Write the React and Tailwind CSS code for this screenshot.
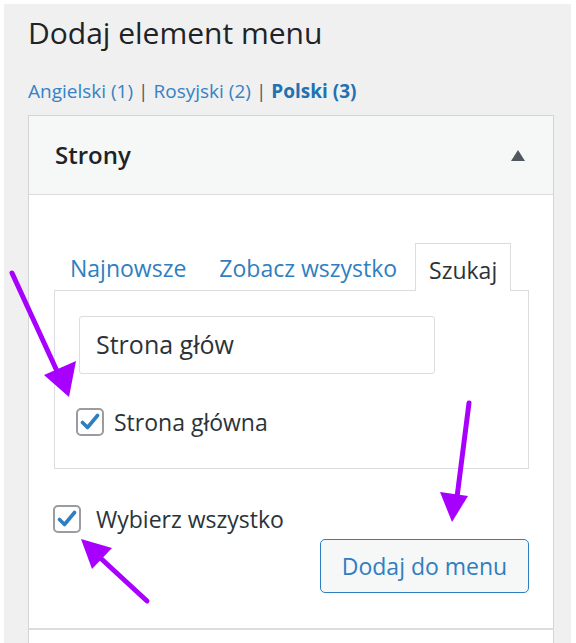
import React from 'react';

const font = { fontFamily: '"Open Sans", "Noto Sans", sans-serif' };

const Check = ({ className = '' }) => (
  <span className={`flex items-center justify-center w-[28px] h-[28px] shrink-0 rounded-[5px] border-2 border-[#9a9ca2] bg-white ${className}`}>
    <svg width="20" height="18" viewBox="0 0 20 18">
      <path d="M2.5 9.5 L7.5 14.5 L17.5 2.5" fill="none" stroke="#2f7fc0" strokeWidth="3.6" strokeLinecap="round" strokeLinejoin="round" />
    </svg>
  </span>
);

export default function App() {
  return (
    <div className="relative w-[576px] h-[643px] overflow-hidden bg-white text-[#2c3338]" style={font}>
      <div className="ml-[4px] mt-[4px] mr-[5px] h-[639px] bg-[#f0f0f1] pl-[24px] pr-[17px]">
        <h2 className="pt-[11px] text-[30px] leading-[36px] text-[#1d2327]">Dodaj element menu</h2>
        <div className="mt-[27px] h-[26px] text-[19px] leading-[26px] text-[#3582c4] flex gap-[5px]">
          <span>Angielski (1)</span>
          <span className="text-[#50575e]">|</span>
          <span>Rosyjski (2)</span>
          <span className="text-[#50575e]">|</span>
          <span className="font-bold text-[#2271b1]">Polski (3)</span>
        </div>
        <div className="mt-[11px] border border-[#d3d4d6] bg-white h-[600px]">
          <div className="h-[79px] bg-[#f6f7f7] border-b border-[#dcdcde] flex items-center justify-between pl-[26px] pr-[28px]">
            <span className="text-[24px] font-semibold text-[#1d2327]">Strony</span>
            <svg width="14" height="11" viewBox="0 0 14 11"><path d="M7 0 L14 11 L0 11 Z" fill="#50575e" /></svg>
          </div>
          <div className="pl-[25px] pr-[24px]">
            <div className="mt-[47px] flex items-end h-[48px] text-[23px] leading-[30px]">
              <span className="pl-[16px] pb-[7px] text-[#2f7fc0]">Najnowsze</span>
              <span className="ml-[33px] pb-[7px] text-[#2f7fc0]">Zobacz wszystko</span>
              <span className="ml-[18px] h-[48px] w-[96px] border border-b-0 border-[#dcdcde] bg-white flex items-center justify-center pt-[4px] relative top-[1px] text-[#2c3338]">Szukaj</span>
            </div>
            <div className="border border-[#dcdcde] h-[179px] pl-[24px] pt-[25px]">
              <div className="w-[356px] h-[58px] border border-[#dcdcde] rounded-[3px] flex items-center pl-[16px] text-[25px] text-[#2c3338]">
                Strona głów
              </div>
              <div className="mt-[34px] h-[28px] flex items-center gap-[10px] -ml-[3px]">
                <Check />
                <span className="text-[23px]">Strona główna</span>
              </div>
            </div>
            <div className="mt-[36px] h-[28px] flex items-center gap-[15px] -ml-[1px]">
              <Check />
              <span className="text-[23px]">Wybierz wszystko</span>
            </div>
            <div className="flex justify-end mt-[6px]">
              <button className="w-[209px] h-[54px] border border-[#2f7fc0] rounded-[5px] bg-[#f6f7f7] text-[23px] text-[#2f7fc0]">Dodaj do menu</button>
            </div>
            <div className="mt-[35px] -mx-[25px] border-t-2 border-[#dcdcde]" />
          </div>
        </div>
      </div>
      <svg className="absolute left-0 top-0 pointer-events-none" width="576" height="643">
        <g stroke="#a800ff" strokeWidth="5" strokeLinecap="round" fill="#a800ff">
          <line x1="12" y1="273" x2="62" y2="382" />
          <path d="M69 397 L44 375 L76 361 Z" stroke="none" />
          <line x1="469" y1="403" x2="456" y2="505" />
          <path d="M452 522 L440 492 L468 496 Z" stroke="none" />
          <line x1="147" y1="601" x2="95" y2="553" />
          <path d="M81 539 L112 548 L92 569 Z" stroke="none" />
        </g>
      </svg>
    </div>
  );
}
